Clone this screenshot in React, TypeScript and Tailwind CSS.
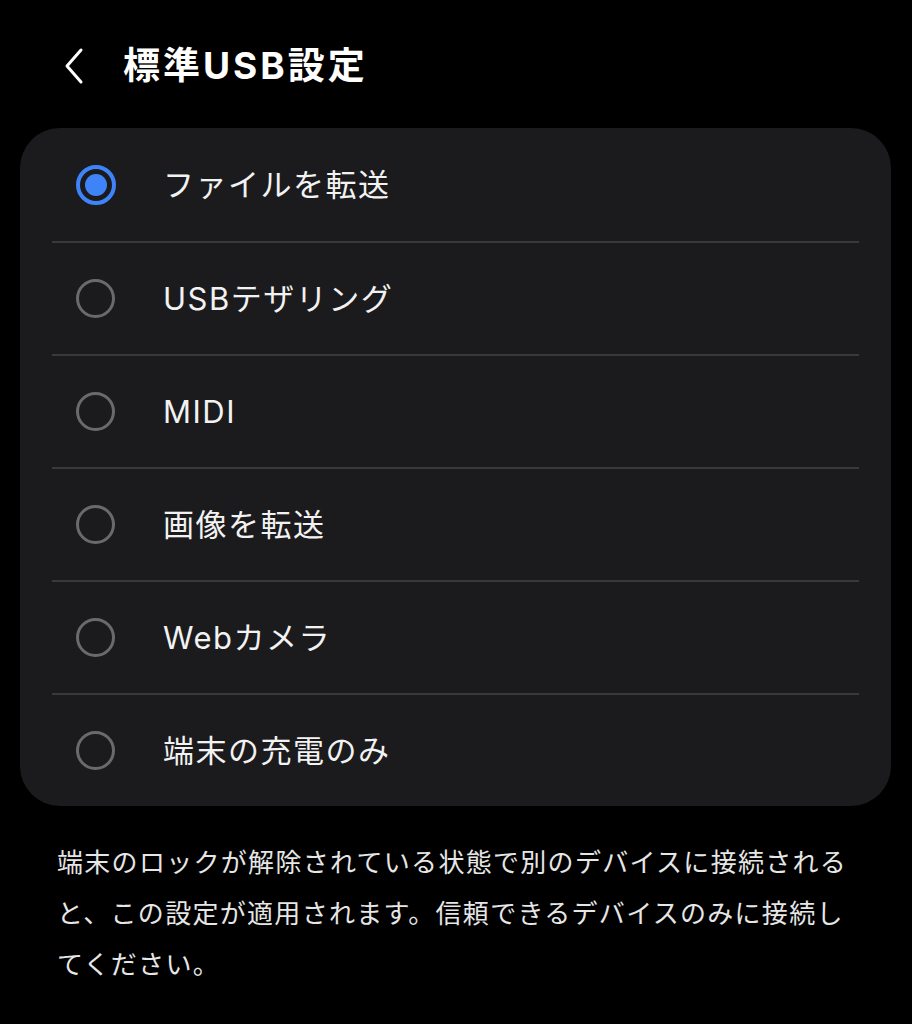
const font = "font-['Inter','Noto_Sans_CJK_JP',sans-serif]";

const options = [
  "ファイルを転送",
  "USBテザリング",
  "MIDI",
  "画像を転送",
  "Webカメラ",
  "端末の充電のみ",
];

function Radio({ checked }: { checked: boolean }) {
  if (checked) {
    return (
      <span className="flex h-[40px] w-[40px] items-center justify-center rounded-full border-[4px] border-[#3e83f7]">
        <span className="h-[22px] w-[22px] rounded-full bg-[#3e83f7]" />
      </span>
    );
  }
  return <span className="block h-[39px] w-[39px] rounded-full border-[3px] border-[#6a6a6c]" />;
}

export default function App() {
  return (
    <div className={`min-h-[1024px] w-full bg-black text-white ${font}`}>
      {/* Header */}
      <div className="flex h-[128px] items-start pt-[38px]">
        <button className="ml-[54px] flex h-[56px] w-[40px] items-center justify-center text-white">
          <svg width="26" height="38" viewBox="0 0 26 38" fill="none">
            <path d="M20 3 L6 19 L20 35" stroke="white" strokeWidth="3" strokeLinecap="round" strokeLinejoin="round" />
          </svg>
        </button>
        <h1 className="ml-[29px] text-[37px] font-bold leading-[56px] tracking-[3px]">標準USB設定</h1>
      </div>

      {/* Options card */}
      <div className="mx-[20px] w-[871px] rounded-[40px] bg-[#1b1b1d] px-[32px]">
        {options.map((label, i) => (
          <div
            key={label}
            className={`flex h-[113px] items-center ${i > 0 ? "border-t-2 border-[#39393b]" : ""}`}
          >
            <div className="flex w-[111px] items-center pl-[24px]">
              <Radio checked={i === 0} />
            </div>
            <span className="text-[31px] leading-none tracking-[1.5px] text-[#f2f2f2]">{label}</span>
          </div>
        ))}
      </div>

      {/* Footnote */}
      <p className="mt-[31px] w-[860px] pl-[57px] text-[26px] leading-[51px] tracking-[1.3px] text-[#e6e6e6]">
        端末のロックが解除されている状態で別のデバイスに接続されると、この設定が適用されます。信頼できるデバイスのみに接続してください。
      </p>
    </div>
  );
}
